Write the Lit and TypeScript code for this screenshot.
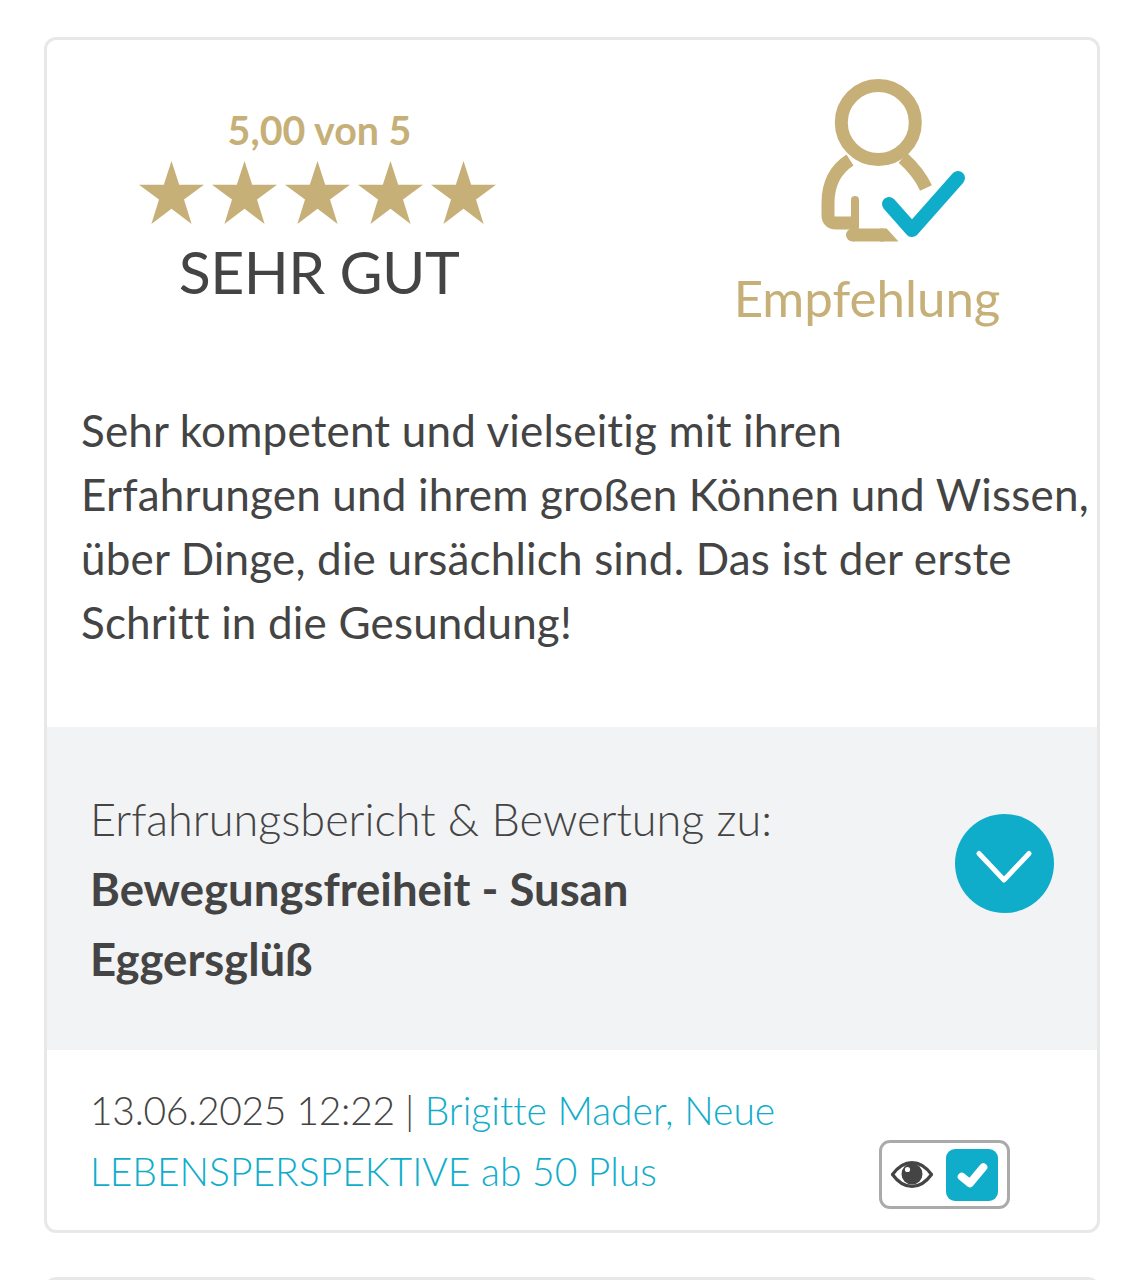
import { LitElement, css, html, svg } from "lit";
import { customElement } from "lit/decorators.js";

const star = svg`<polygon points="32.5,0 40.2,23.7 65,23.7 45,38.4 52.6,63 32.5,47.8 12.4,63 20,38.4 0,23.7 24.8,23.7"></polygon>`;

@customElement("app-root")
export class AppRoot extends LitElement {
  static styles = css`
    :host {
      display: block;
      height: 1280px;
      overflow: hidden;
      background: #fff;
      padding: 37px 44px 0;
      box-sizing: border-box;
      font-family: "Lato", "Noto Sans", sans-serif;
      font-variant-ligatures: none;
      color: #444;
    }
    .card {
      border: 3px solid #e8e8e8;
      border-radius: 12px;
      height: 1196px;
      box-sizing: border-box;
      display: flex;
      flex-direction: column;
      background: #fff;
    }
    .next {
      border: 3px solid #e8e8e8;
      border-bottom: 0;
      border-radius: 12px 12px 0 0;
      height: 20px;
      margin-top: 44px;
    }
    .top {
      display: flex;
      height: 321px;
    }
    .rating {
      width: 540px;
      display: flex;
      flex-direction: column;
      align-items: center;
      padding-top: 65px;
      box-sizing: border-box;
    }
    .score {
      font-size: 39.4px;
      line-height: 50px;
      font-weight: 700;
      color: #c6b078;
      margin-left: 5px;
    }
    .stars {
      display: block;
      margin-top: 6px;
      fill: #c6b078;
    }
    .verdict {
      font-size: 59px;
      line-height: 70px;
      font-weight: 400;
      margin: 13px 0 0 4px;
      letter-spacing: -0.5px;
    }
    .recommend {
      flex: 1;
      display: flex;
      flex-direction: column;
      align-items: center;
      padding-left: 50px;
      padding-top: 22px;
    }
    .recommend svg {
      display: block;
    }
    .recommend span {
      font-size: 51px;
      line-height: 60px;
      font-weight: 400;
      color: #c6b078;
      margin-top: 16px;
    }
    .text {
      margin: 0;
      padding: 37px 0 0 34px;
      height: 366px;
      box-sizing: border-box;
      font-size: 44px;
      line-height: 64px;
      font-weight: 400;
      letter-spacing: 0.18px;
      white-space: nowrap;
    }
    .product {
      background: #f2f3f5;
      height: 323px;
      padding: 58px 43px 0;
      box-sizing: border-box;
      display: flex;
      justify-content: space-between;
    }
    .product-title {
      font-size: 45px;
      line-height: 69px;
      font-weight: 300;
      white-space: nowrap;
    }
    .product-title b {
      font-weight: 700;
      font-size: 45.5px;
    }
    .circle {
      display: block;
      margin-top: 29px;
    }
    .meta {
      flex: 1;
      position: relative;
      padding: 30px 43px 0;
      font-size: 39px;
      line-height: 61px;
      font-weight: 300;
      white-space: nowrap;
    }
    .date {
      letter-spacing: -0.3px;
    }
    .meta a {
      color: #10adcb;
      text-decoration: none;
    }
    .check {
      position: absolute;
      left: 832px;
      top: 90px;
      width: 131px;
      height: 69px;
      box-sizing: border-box;
      border: 3px solid #aaa;
      border-radius: 11px;
      display: flex;
      align-items: center;
      gap: 13px;
      padding-left: 9px;
      background: #fff;
    }
    .box {
      width: 52px;
      height: 52px;
      display: block;
    }
  `;

  render() {
    return html`
      <div class="card">
        <div class="top">
          <div class="rating">
            <div class="score">5,00 von 5</div>
            <svg class="stars" width="357" height="63" viewBox="0 0 357 63">
              ${[0, 73, 146, 219, 292].map((x) => svg`<g transform="translate(${x} 0)">${star}</g>`)}
            </svg>
            <div class="verdict">SEHR GUT</div>
          </div>
          <div class="recommend">
            <svg width="200" height="190" viewBox="0 0 200 190" fill="none">
              <g transform="translate(13 -2)">
                <g stroke="#c6b078" stroke-width="13">
                  <circle cx="98.3" cy="62.5" r="37"></circle>
                  <path d="M70 100C56 109 48 124 48 143V155Q48 163 56 163H74"></path>
                  <path d="M123 98C133 107 141 117 146 128"></path>
                  <path d="M72.5 175H104"></path>
                  <path d="M75 140V175" stroke-width="8" stroke-linecap="round"></path>
                </g>
                <path d="M100 168.5H106.7L118.5 181.5H100Z" fill="#c6b078"></path>
                <circle cx="72.5" cy="175" r="6.5" fill="#c6b078"></circle>
                <path d="M109 144L132 170L178 118" stroke="#10adcb" stroke-width="14" stroke-linecap="round" stroke-linejoin="round"></path>
              </g>
            </svg>
            <span>Empfehlung</span>
          </div>
        </div>
        <p class="text">Sehr kompetent und vielseitig mit ihren<br />Erfahrungen und ihrem großen Können und Wissen,<br />über Dinge, die ursächlich sind. Das ist der erste<br />Schritt in die Gesundung!</p>
        <div class="product">
          <div class="product-title">Erfahrungsbericht &amp; Bewertung zu:<br /><b>Bewegungsfreiheit - Susan<br />Eggersglüß</b></div>
          <svg class="circle" width="99" height="99" viewBox="0 0 99 99">
            <circle cx="49.5" cy="49.5" r="49.5" fill="#10adcb"></circle>
            <path d="M24 39.5L49 66L74 39.5" fill="none" stroke="#fff" stroke-width="5" stroke-linecap="round" stroke-linejoin="round"></path>
          </svg>
        </div>
        <div class="meta">
          <span class="date">13.06.2025 12:22 |</span> <a href="#">Brigitte Mader, Neue<br />LEBENSPERSPEKTIVE ab 50 Plus</a>
          <div class="check">
            <svg width="42" height="27" viewBox="0 0 42 27">
              <path d="M1.5 13.5C8 4.5 14 1.6 21 1.6S34 4.5 40.5 13.5C34 22.5 28 25.4 21 25.4S8 22.5 1.5 13.5Z" fill="none" stroke="#444" stroke-width="3.2"></path>
              <circle cx="21" cy="13" r="10.5" fill="#444"></circle>
              <circle cx="16.5" cy="8.5" r="2.6" fill="#fff"></circle>
            </svg>
            <svg class="box" viewBox="0 0 52 52">
              <rect width="52" height="52" rx="9" fill="#10adcb"></rect>
              <path d="M15.7 27.7L24 34.3L37.3 18.3" fill="none" stroke="#fff" stroke-width="8" stroke-linecap="round" stroke-linejoin="round"></path>
            </svg>
          </div>
        </div>
      </div>
      <div class="next"></div>
    `;
  }
}
